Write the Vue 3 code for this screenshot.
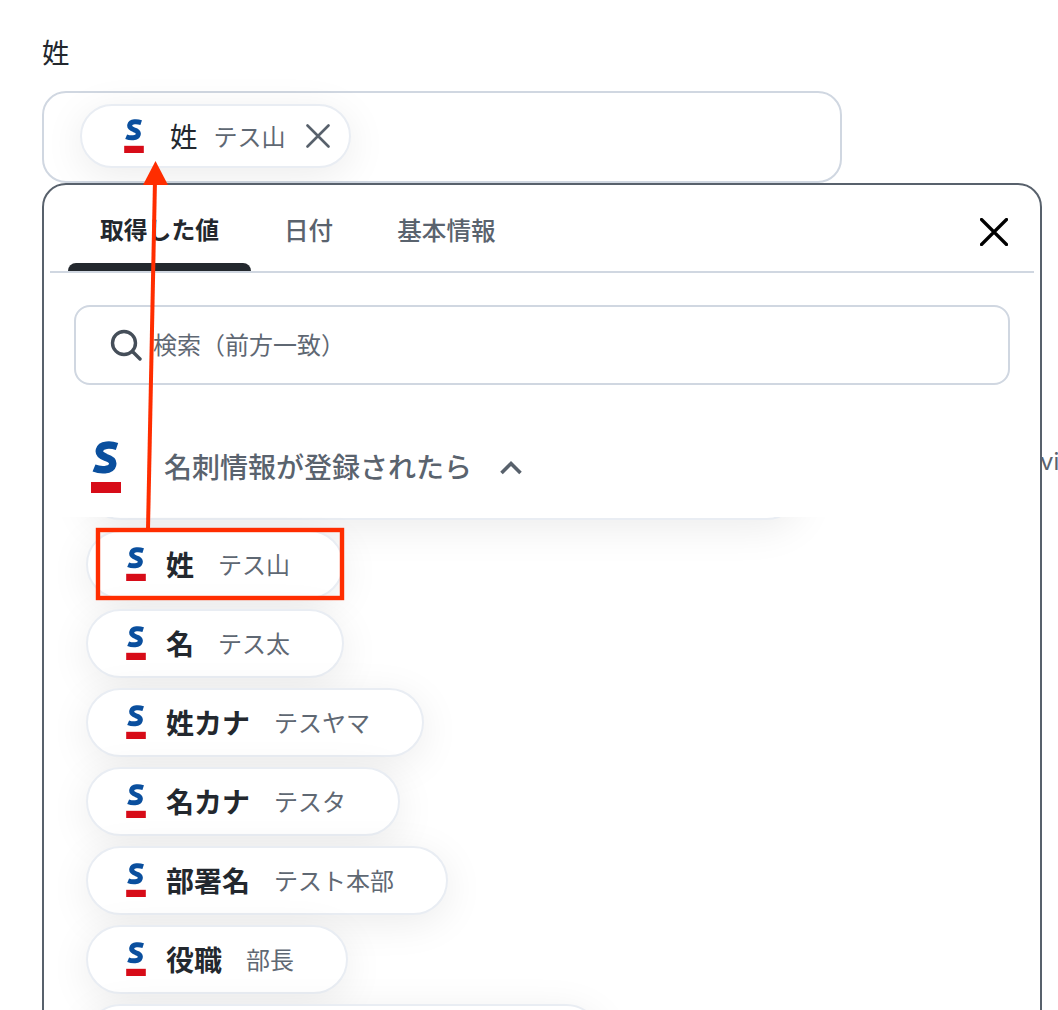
<script setup>
const chips = [
  { name: '姓', value: 'テス山' },
  { name: '名', value: 'テス太' },
  { name: '姓カナ', value: 'テスヤマ' },
  { name: '名カナ', value: 'テスタ' },
  { name: '部署名', value: 'テスト本部' },
  { name: '役職', value: '部長' },
]
const tabs = ['取得した値', '日付', '基本情報']
</script>

<template>
  <div class="page">
    <div class="label">姓</div>
    <div class="field">
      <div class="chip field-chip">
        <svg class="logo" viewBox="0 0 30 52"><path d="M26 5.5C20 3.5 10 3 8.5 9C7.5 13 11 15 15 16.5C20 18 22.5 20 21.5 24C20 30 9 29.5 3 27" fill="none" stroke="#0a4f9e" stroke-width="7.5"/><rect x="0" y="41" width="30" height="11" fill="#d70c18"/></svg>
        <span class="field-name">姓</span>
        <span class="value">テス山</span>
        <svg class="chip-x" viewBox="0 0 24 24"><path d="M1.5 1.5L22.5 22.5M22.5 1.5L1.5 22.5" fill="none" stroke="#58616c" stroke-width="2.6" stroke-linecap="round"/></svg>
      </div>
    </div>

    <span class="stray">vi</span>

    <div class="panel">
      <div class="tabs">
        <div v-for="(t, i) in tabs" :key="t" class="tab" :class="{ active: i === 0 }">{{ t }}</div>
        <svg class="close" viewBox="0 0 28 28"><path d="M1.5 1.5L26.5 26.5M26.5 1.5L1.5 26.5" fill="none" stroke="#000" stroke-width="3.2" stroke-linecap="round"/></svg>
      </div>

      <div class="search">
        <svg class="search-icon" viewBox="0 0 32 32"><circle cx="14" cy="14" r="11.5" fill="none" stroke="#454e59" stroke-width="3.4"/><path d="M23 23L30 30" stroke="#454e59" stroke-width="3.4" stroke-linecap="round"/></svg>
        <span class="search-text">検索（前方一致）</span>
      </div>

      <div class="section">
        <svg class="section-logo" viewBox="0 0 30 52"><path d="M26 5.5C20 3.5 10 3 8.5 9C7.5 13 11 15 15 16.5C20 18 22.5 20 21.5 24C20 30 9 29.5 3 27" fill="none" stroke="#0a4f9e" stroke-width="7.5"/><rect x="0" y="41" width="30" height="11" fill="#d70c18"/></svg>
        <span class="section-title">名刺情報が登録されたら</span>
        <svg class="chevron" viewBox="0 0 24 16"><path d="M2.5 13L12 3.5L21.5 13" fill="none" stroke="#58616c" stroke-width="3.6"/></svg>
      </div>

      <div class="list">
        <div class="chip hidden-chip"></div>
        <div v-for="c in chips" :key="c.name" class="chip">
          <svg class="logo" viewBox="0 0 30 52"><path d="M26 5.5C20 3.5 10 3 8.5 9C7.5 13 11 15 15 16.5C20 18 22.5 20 21.5 24C20 30 9 29.5 3 27" fill="none" stroke="#0a4f9e" stroke-width="7.5"/><rect x="0" y="41" width="30" height="11" fill="#d70c18"/></svg>
          <span class="name">{{ c.name }}</span>
          <span class="value">{{ c.value }}</span>
        </div>
        <div class="chip last-chip"></div>
      </div>
    </div>

    <svg class="annotation" viewBox="0 0 1058 1010" width="1058" height="1010">
      <path d="M148 529L155 180" fill="none" stroke="#ff2d00" stroke-width="4"/>
      <polygon points="155.5,161 143,185 168,185" fill="#ff2d00"/>
      <rect x="98" y="530" width="244" height="68" fill="none" stroke="#ff2d00" stroke-width="4.4"/>
    </svg>
  </div>
</template>

<style>
html, body { margin: 0; background: #fff; overflow: hidden; }
</style>

<style scoped>
.page {
  position: relative;
  width: 1058px;
  height: 1010px;
  overflow: hidden;
  padding: 30px 0 0 42px;
  box-sizing: border-box;
  background: #fff;
  font-family: "Noto Sans CJK JP", "Noto Sans", sans-serif;
  color: #23282e;
}
.label { font-size: 27.5px; line-height: 42px; height: 61px; }
.field {
  width: 800px;
  height: 92px;
  box-sizing: border-box;
  border: 2px solid #d0d7e1;
  border-radius: 24px;
  padding: 11px 0 0 36px;
}
.chip {
  display: flex;
  align-items: center;
  width: fit-content;
  height: 69px;
  box-sizing: border-box;
  border: 2px solid #e9edf3;
  border-radius: 35px;
  background: #fff;
  padding: 0 52px 2px 38px;
  box-shadow: 0 8px 40px rgba(0, 0, 0, 0.08);
}
.field-chip { height: 64px; padding: 0 19px 0 42px; border-radius: 32px; }
.logo { width: 20px; height: 34px; flex: none; margin-right: 20px; }
.field-chip .logo { margin-right: 26px; }
.name { font-size: 28px; font-weight: 700; margin-right: 24px; line-height: 1; }
.field-name { font-size: 27.5px; margin-right: 16px; line-height: 1; }
.value { font-size: 24px; color: #5f6873; line-height: 1; font-weight: 400; }
.chip-x { width: 24px; height: 24px; margin-left: 20px; }
.stray {
  position: absolute;
  left: 1040px;
  top: 444px;
  font: 24px/36px "Inter", sans-serif;
  color: #5a636e;
}
.panel {
  position: relative;
  width: 1000px;
  height: 900px;
  box-sizing: border-box;
  border: 2px solid #58616c;
  border-radius: 24px;
  background: #fff;
}
.tabs {
  position: relative;
  display: flex;
  height: 88px;
  box-sizing: border-box;
  margin: 0 6px;
  padding-left: 18px;
  border-bottom: 2px solid #d0d7e1;
}
.tab {
  position: relative;
  height: 86px;
  box-sizing: border-box;
  padding: 26px 31px 0 33px;
  font-size: 24.6px;
  line-height: 36px;
  font-weight: 500;
  color: #5a636e;
}
.tab.active { color: #23282e; font-weight: 700; font-size: 23.8px; padding: 26px 32px 0; }
.tab.active::after {
  content: "";
  position: absolute;
  left: 0;
  right: 0;
  bottom: 0;
  height: 8px;
  background: #23282e;
  border-radius: 8px 8px 0 0;
}
.close { position: absolute; right: 26px; top: 33px; width: 28px; height: 28px; }
.search {
  display: flex;
  align-items: center;
  margin: 32px 30px 0;
  height: 80px;
  box-sizing: border-box;
  border: 2px solid #d0d7e1;
  border-radius: 16px;
  padding-left: 34px;
  font-size: 24px;
  font-weight: 400;
  color: #5f6873;
}
.search-text { margin-top: -4px; }
.search-icon { width: 32px; height: 32px; margin-right: 11px; flex: none; }
.section {
  position: relative;
  z-index: 2;
  display: flex;
  align-items: center;
  height: 92px;
  box-sizing: border-box;
  margin-top: 40px;
  padding: 0 0 10px 47px;
  background: #fff;
}
.section-logo { width: 30px; height: 52px; margin: 2px 43px 0 0; flex: none; }
.section-title { font-size: 28px; font-weight: 500; color: #5a636e; line-height: 1; }
.chevron { width: 24px; height: 16px; margin-left: 27px; margin-top: 4px; }
.list {
  display: flex;
  flex-direction: column;
  gap: 10px;
  margin-top: -66px;
  padding-left: 42px;
}
.hidden-chip { width: 715px; }
.last-chip { width: 515px; }
.annotation { position: absolute; left: 0; top: 0; pointer-events: none; z-index: 5; }
</style>
